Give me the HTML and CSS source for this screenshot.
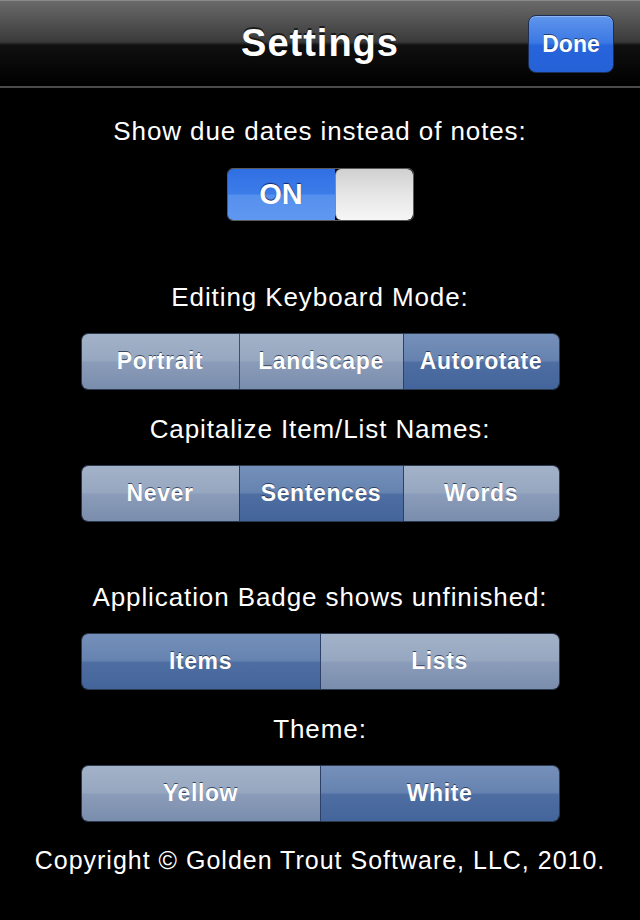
FILE: index.html
```html
<!DOCTYPE html>
<html lang="en">

<head>
    <meta charset="UTF-8">
    <meta name="viewport" content="width=device-width, initial-scale=1.0">
    <title>Settings</title>
    <link rel="stylesheet" href="styles.css">
</head>

<body>
    <div class="navbar">
        <h1 class="nav-title">Settings</h1>
        <button class="done-btn">Done</button>
    </div>

    <div class="content">
        <div class="label first">Show due dates instead of notes:</div>
        <div class="switch">
            <div class="switch-on">ON</div>
            <div class="switch-knob"></div>
        </div>

        <div class="label after-switch">Editing Keyboard Mode:</div>
        <div class="segmented three">
            <div class="segment">Portrait</div>
            <div class="segment">Landscape</div>
            <div class="segment selected">Autorotate</div>
        </div>

        <div class="label">Capitalize Item/List Names:</div>
        <div class="segmented three">
            <div class="segment">Never</div>
            <div class="segment selected">Sentences</div>
            <div class="segment">Words</div>
        </div>

        <div class="label spaced">Application Badge shows unfinished:</div>
        <div class="segmented">
            <div class="segment selected">Items</div>
            <div class="segment">Lists</div>
        </div>

        <div class="label">Theme:</div>
        <div class="segmented">
            <div class="segment">Yellow</div>
            <div class="segment selected">White</div>
        </div>

        <div class="copyright">Copyright © Golden Trout Software, LLC, 2010.</div>
    </div>
</body>

</html>
```

FILE: styles.css
```css
body {
    margin: 0;
    background-color: #000;
    color: #fff;
    font-family: "Liberation Sans", Arial, sans-serif;
}

.navbar {
    box-sizing: border-box;
    height: 88px;
    border-top: 1px solid #8a8a8a;
    border-bottom: 2px solid #4a4a4a;
    background: linear-gradient(to bottom, #6a6a6a 0%, #3a3a3a 48%, #101010 52%, #000 100%);
    display: flex;
    align-items: center;
    justify-content: center;
    position: relative;
}

.nav-title {
    margin: 0;
    font-size: 38px;
    font-weight: bold;
    letter-spacing: 1px;
    text-shadow: 0 -2px 0 rgba(0, 0, 0, 0.6);
}

.done-btn {
    position: absolute;
    right: 26px;
    top: 14px;
    width: 86px;
    height: 58px;
    border: 1px solid #1c2e55;
    border-radius: 8px;
    background: linear-gradient(to bottom, #5f95ec 0%, #3b78e4 48%, #2765dc 52%, #2560d6 100%);
    box-shadow: inset 0 1px 0 rgba(255, 255, 255, 0.3);
    color: #fff;
    font-family: "Liberation Sans", Arial, sans-serif;
    font-size: 23px;
    font-weight: bold;
    text-shadow: 0 -1px 0 rgba(0, 0, 0, 0.5);
    padding: 0;
}

.content {
    display: flex;
    flex-direction: column;
    align-items: center;
}

.label {
    font-size: 26px;
    line-height: 30px;
    letter-spacing: 0.9px;
    margin-top: 24px;
    margin-bottom: 21px;
}

.label.first {
    margin-top: 28px;
    margin-bottom: 22px;
}

.label.after-switch {
    margin-top: 61px;
}

.label.spaced {
    margin-top: 60px;
}

.switch {
    display: flex;
    width: 187px;
    height: 53px;
    border-radius: 6px;
    overflow: hidden;
    border: 1px solid #5a5a5a;
    box-sizing: border-box;
}

.switch-on {
    width: 107px;
    background: linear-gradient(to bottom, #2f6fe4 0%, #3c7ce8 48%, #5690ee 52%, #5f98f0 100%);
    display: flex;
    align-items: center;
    justify-content: center;
    font-size: 29px;
    font-weight: bold;
    text-shadow: 0 -1px 1px rgba(0, 0, 60, 0.7);
}

.switch-knob {
    flex: 1;
    background: linear-gradient(to bottom, #d0d0d0 0%, #e6e6e6 50%, #f6f6f6 100%);
    border-left: 1px solid #8a8a8a;
    border-radius: 6px;
}

.segmented {
    display: flex;
    width: 479px;
    height: 57px;
    box-sizing: border-box;
    border: 1px solid #2c3a50;
    border-radius: 7px;
    overflow: hidden;
}

.segment {
    flex: 1;
    display: flex;
    align-items: center;
    justify-content: center;
    font-size: 23px;
    font-weight: bold;
    letter-spacing: 0.6px;
    text-shadow: 0 -1px 0 rgba(30, 45, 70, 0.8);
    background: linear-gradient(to bottom, #a3b2c8 0%, #96a7c0 48%, #8a9cb9 52%, #7a8dac 100%);
    border-left: 1px solid #40506a;
}

.segment:first-child {
    border-left: none;
}

.segmented.three .segment:nth-child(1) {
    flex: 0 0 157px;
}

.segmented.three .segment:nth-child(2) {
    flex: 0 0 163px;
}

.segment.selected {
    background: linear-gradient(to bottom, #7590b9 0%, #6682b0 48%, #4e6ea2 52%, #44659b 100%);
    border-left-color: #2c4068;
}

.segment.selected + .segment {
    border-left-color: #2c4068;
}

.copyright {
    margin-top: 23px;
    font-size: 25px;
    line-height: 30px;
    letter-spacing: 1px;
}
```
